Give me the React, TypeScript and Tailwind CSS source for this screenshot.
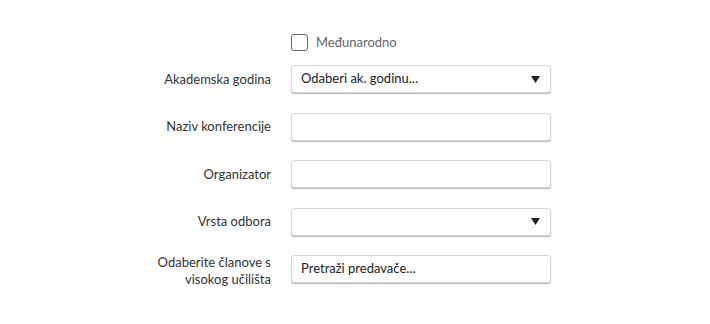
import React from "react";

const Caret = () => (
  <svg width="9" height="7" viewBox="0 0 9 7" className="shrink-0">
    <polygon points="0,0 9,0 4.5,7" fill="#222" />
  </svg>
);

const fieldCls =
  "w-[260px] h-[28px] bg-white border border-[#d6d6d6] rounded-[3px] shadow-[0_1px_1px_rgba(0,0,0,0.3)] flex items-center px-[9px] text-[13px] text-[#222]";

const Row = ({
  label,
  children,
  top,
}: {
  label: string;
  children: React.ReactNode;
  top?: boolean;
}) => (
  <div className={`flex ${top ? "items-start" : "items-center"} gap-[20px]`}>
    <label
      className={`w-[115px] text-right text-[13px] leading-[17px] text-[#333] ${
        top ? "-mt-[1px]" : ""
      }`}
    >
      {label}
    </label>
    {children}
  </div>
);

export default function App() {
  return (
    <div
      className="w-[710px] h-[324px] bg-white pt-[34px] pl-[156px]"
      style={{ fontFamily: "Lato, 'Noto Sans', sans-serif" }}
    >
      <div className="flex items-center gap-[8px] ml-[135px] h-[17px]">
        <span className="w-[17px] h-[17px] border border-[#666] rounded-[3px] bg-white" />
        <span className="text-[13px] text-[#666]">Međunarodno</span>
      </div>

      <div className="flex flex-col gap-[19.5px] mt-[14px]">
        <Row label="Akademska godina">
          <div className={`${fieldCls} justify-between pr-[10px]`}>
            <span>Odaberi ak. godinu...</span>
            <Caret />
          </div>
        </Row>
        <Row label="Naziv konferencije">
          <input className={fieldCls} />
        </Row>
        <Row label="Organizator">
          <input className={fieldCls} />
        </Row>
        <Row label="Vrsta odbora">
          <div className={`${fieldCls} justify-end pr-[10px]`}>
            <Caret />
          </div>
        </Row>
        <Row label="Odaberite članove s visokog učilišta" top>
          <div className={fieldCls}>
            <span>Pretraži predavače...</span>
          </div>
        </Row>
      </div>
    </div>
  );
}
